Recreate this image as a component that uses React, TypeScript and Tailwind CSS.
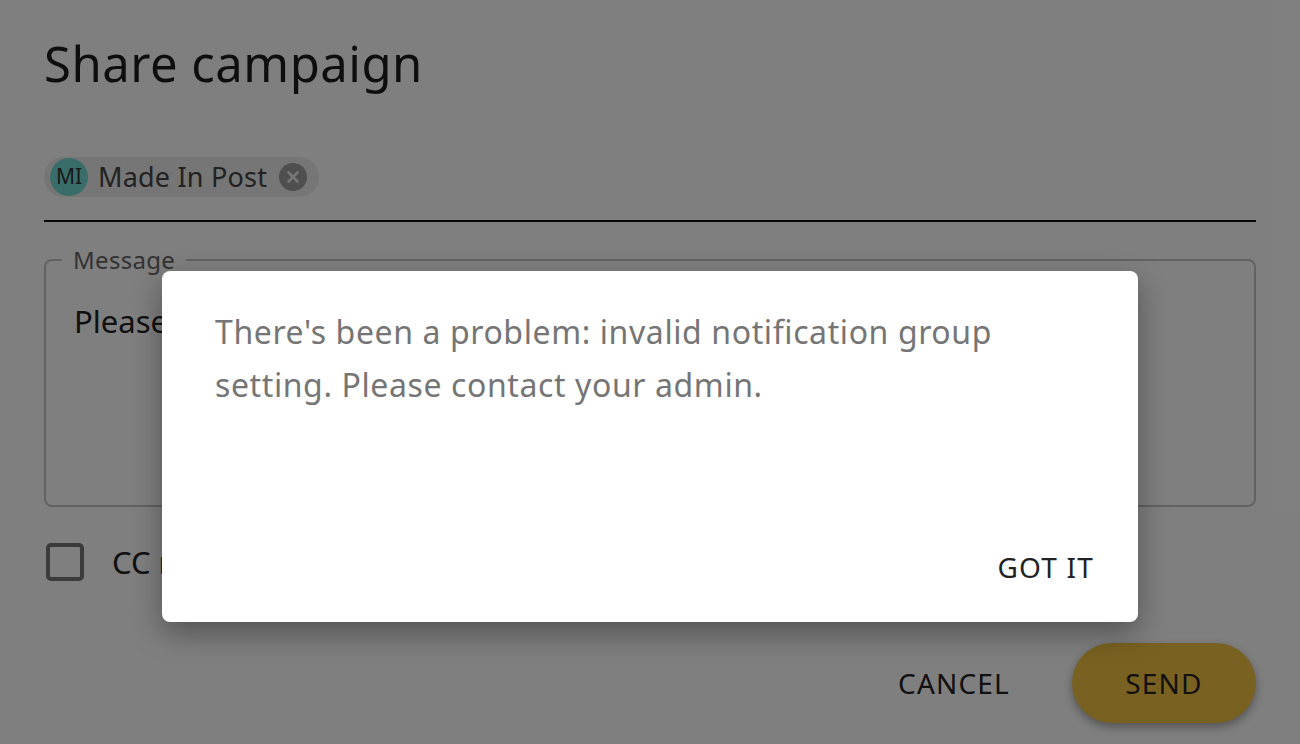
import { X } from 'lucide-react';

const font = { fontFamily: '"Noto Sans", "Open Sans", sans-serif' };

function Chip() {
  return (
    <div className="flex h-[40px] items-center rounded-full bg-[#ececec] pl-[6px] pr-[12px]">
      <div className="flex h-[38px] w-[38px] items-center justify-center rounded-full bg-[#72dbd5] text-[21px] text-[#333]">
        MI
      </div>
      <span className="ml-[10px] text-[27px] tracking-[0.2px] text-[#444]">Made In Post</span>
      <span className="ml-[12px] flex h-[28px] w-[28px] items-center justify-center rounded-full bg-[#9e9e9e]">
        <X size={18} strokeWidth={3.5} className="text-[#ececec]" />
      </span>
    </div>
  );
}

export default function App() {
  return (
    <div className="relative h-[744px] w-[1300px] overflow-hidden bg-white" style={font}>
      <div className="flex flex-col px-[44px] pt-[28px]">
        <h1 className="text-[49px] leading-[70px] tracking-[0.5px] text-[#1c1c1c]">Share campaign</h1>

        <div className="mt-[59px] flex border-b-2 border-[#111] pb-[23px]">
          <Chip />
        </div>

        <fieldset className="mt-[26px] h-[259px] rounded-[8px] border-2 border-[#c4c4c4] px-[16px]">
          <legend className="px-[11px] text-[24px] leading-[24px] tracking-[0.3px] text-[#666]">Message</legend>
          <p className="mt-[26px] pl-[12px] text-[31px] text-[#222]">Please take a look at this campaign.</p>
        </fieldset>

        <label className="mt-[32px] flex items-center gap-[28px]">
          <span className="ml-[2px] h-[38px] w-[38px] rounded-[5px] border-[4px] border-[#777]" />
          <span className="text-[31px] text-[#222]">CC me on this message</span>
        </label>

        <div className="mt-[57px] flex items-center justify-end gap-[62px]">
          <button type="button" className="text-[28px] tracking-[1.2px] text-[#222]">
            CANCEL
          </button>
          <button
            type="button"
            className="h-[80px] w-[184px] rounded-full bg-[#f3c443] text-[28px] tracking-[1.2px] text-[#222] shadow-[0_4px_10px_rgba(0,0,0,0.35)]"
          >
            SEND
          </button>
        </div>
      </div>

      <div className="absolute inset-0 flex items-start justify-center bg-black/50 pt-[271px]">
        <div className="flex h-[351px] w-[976px] flex-col rounded-[8px] bg-white pb-[34px] pl-[53px] pr-[44px] pt-[34px] shadow-[0_11px_30px_rgba(0,0,0,0.35)]">
          <p className="max-w-[840px] text-[32px] leading-[53px] tracking-[0.6px] text-[#757575]">
            There's been a problem: invalid notification group setting. Please contact your admin.
          </p>
          <div className="mt-auto flex justify-end">
            <button type="button" className="text-[28px] tracking-[1.2px] text-[#222]">
              GOT IT
            </button>
          </div>
        </div>
      </div>
    </div>
  );
}
